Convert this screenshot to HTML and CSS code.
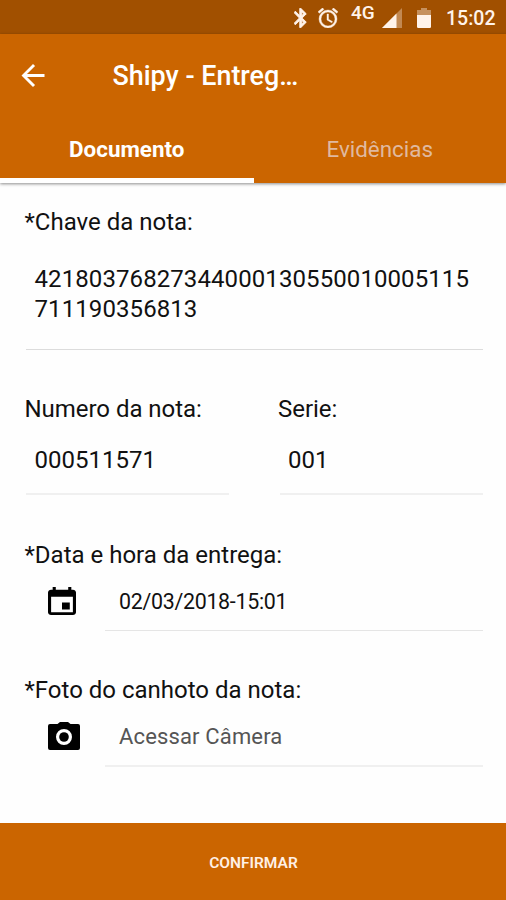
FILE: index.html
```html
<!DOCTYPE html>
<html lang="pt-BR">
<head>
<meta charset="utf-8">
<title>Shipy - Entrega</title>
<link rel="stylesheet" href="styles.css">
</head>
<body>
<div class="screen">
  <div class="status">
    <svg class="bt" viewBox="5 2 14.5 20" width="14" height="20"><path fill="currentColor" stroke="currentColor" stroke-width="1" d="M17.71 7.71 12 2h-1v7.59L6.41 5 5 6.41 10.59 12 5 17.59 6.41 19 11 14.41V22h1l5.71-5.71-4.3-4.29 4.3-4.29zM13 5.83l1.88 1.88L13 9.59V5.83zm1.88 10.46L13 18.17v-3.76l1.88 1.88z"/></svg>
    <svg class="alarm" viewBox="2 2 20 20" width="20" height="20"><path fill="currentColor" stroke="currentColor" stroke-width=".4" d="M22 5.72l-4.6-3.86-1.29 1.53 4.6 3.86L22 5.72zM7.88 3.39 6.6 1.86 2 5.71l1.29 1.53 4.59-3.85zM12.5 8H11v6l4.75 2.85.75-1.23-4-2.37V8zM12 4a9 9 0 1 0 0 18 9 9 0 0 0 0-18zm0 16a7 7 0 1 1 0-14 7 7 0 0 1 0 14z"/></svg>
    <span class="net">4G</span>
    <svg class="signal" viewBox="0 0 20 20" width="20" height="20"><path fill="currentColor" opacity=".35" d="M0 20 20 0v20z"/><path fill="currentColor" d="M0 20 14.5 5.5V20z"/></svg>
    <svg class="battery" viewBox="0 0 14 20" width="14" height="20"><path fill="currentColor" opacity=".4" d="M0 7V2h4V0h6v2h4v5z"/><path fill="currentColor" d="M0 7h14v11.8q0 1.2-1.2 1.2H1.2Q0 20 0 18.800z"/></svg>
    <span class="clock">15:02</span>
  </div>
  <header class="top">
    <div class="bar">
      <svg class="back" viewBox="4 4 16 16" width="23" height="23"><path fill="currentColor" d="M20 11H7.830l5.590-5.590L12 4l-8 8 8 8 1.410-1.410L7.830 13H20v-2z"/></svg>
      <h1>Shipy - Entreg…</h1>
    </div>
    <nav class="tabs">
      <span class="tab active">Documento</span>
      <span class="tab">Evidências</span>
    </nav>
  </header>
  <main class="form">
    <section class="field key">
      <label>*Chave da nota:</label>
      <div class="value">42180376827344000130550010005115<br>711190356813</div>
    </section>
    <div class="pair">
      <section class="field">
        <label>Numero da nota:</label>
        <div class="value">000511571</div>
      </section>
      <section class="field">
        <label>Serie:</label>
        <div class="value">001</div>
      </section>
    </div>
    <section class="field date">
      <label>*Data e hora da entrega:</label>
      <div class="row">
        <svg class="calendar" viewBox="3 1 18 20" width="28" height="28" preserveAspectRatio="none"><path d="M19 3h-1V1h-2v2H8V1H6v2H5c-1.110 0-1.990.9-1.990 2L3 19c0 1.100.89 2 2 2h14c1.100 0 2-.9 2-2V5c0-1.100-.9-2-2-2zm0 16H5V8h14v11zM17 12h-5v5h5v-5z"/></svg>
        <div class="value small">02/03/2018-15:01</div>
      </div>
    </section>
    <section class="field photo">
      <label>*Foto do canhoto da nota:</label>
      <div class="row">
        <svg class="camera" viewBox="0 0 32 28" width="32" height="28"><path fill-rule="evenodd" d="M2 2H9.500L12 0h8l2.500 2H30q2 0 2 2v22q0 2-2 2H2q-2 0-2-2V4q0-2 2-2zM16 7a8 8 0 1 0 0 16 8 8 0 0 0 0-16z"/><circle cx="16" cy="15" r="4.800"/></svg>
        <div class="value small hint">Acessar Câmera</div>
      </div>
    </section>
  </main>
  <button class="confirm">CONFIRMAR</button>
</div>
</body>
</html>
```
FILE: styles.css
```css
* { box-sizing: border-box; }
body { margin: 0; font-family: Roboto, "Liberation Sans", sans-serif; color: #111; background: #fefefe; }
.screen { width: 506px; height: 900px; display: flex; flex-direction: column; }
svg { flex: none; display: block; }

.status { height: 34px; background: #a15000; color: #fff3ea; display: flex; align-items: center; padding: 2px 0 0 294px; }
.alarm { margin-left: 10px; }
.net { margin: -10px 0 0 13px; width: 25px; font-size: 19px; font-weight: 500; line-height: 20px; }
.signal { margin-left: 6px; }
.battery { margin-left: 15px; }
.clock { margin: 2px 0 0 15px; font-size: 19.5px; font-weight: 500; line-height: 24px; white-space: nowrap; }

.top { height: 149px; background: #cb6500; color: #fff; box-shadow: 0 1px 3px rgba(0,0,0,.45); position: relative; }
.bar { height: 84px; display: flex; align-items: center; padding: 0 0 1px 21px; }
.back { width: 24px; }
h1 { margin: 0 0 0 67.500px; font-size: 26.900px; font-weight: 500; line-height: 32px; }
.tabs { display: grid; grid-template-columns: 253.500px 252.500px; height: 65px; }
.tab { text-align: center; font-size: 22.400px; line-height: 58px; padding-top: 2px; color: #e0b99f; border-bottom: 5px solid transparent; }
.tab.active { color: #fff; font-weight: 700; border-bottom-color: #fff; }

.form { flex: 1; padding: 24px 23px 0 24.500px; }
label { display: block; font-size: 24px; line-height: 30px; }
.value { font-size: 24px; line-height: 30px; padding-left: 8.500px; border-bottom: 2px solid #f0f0f0; white-space: nowrap; }
.key .value { margin: 27px 0 0 1.500px; height: 86px; border-bottom: 1px solid #dcdcdc; letter-spacing: .09px; }
.pair { display: grid; grid-template-columns: 204.500px 205px; column-gap: 49px; margin-top: 44px; }
.pair label { letter-spacing: -.04px; }
.pair .value { margin: 21px 0 0 1.500px; height: 50px; }
.date { margin-top: 45px; }
.row { display: flex; align-items: flex-start; }
.row .value { flex: 1; height: 45px; padding-left: 14px; }
.small { font-size: 22px; }
.date .small { font-size: 21.400px; letter-spacing: -.3px; padding-top: 1px; border-bottom: 1px solid #e5e5e5; }
.row .hint { height: 46px; padding-top: 1px; color: #555; letter-spacing: .15px; }
.calendar { margin: 1px 29px 0 23.500px; }
.date .row { margin-top: 16px; }
.camera { margin: 1px 25px 0 23.500px; }
.photo { margin-top: 44px; }
.photo .row { margin-top: 16px; }

.confirm { height: 77px; border: 0; padding: 3px 0 0 1px; background: #cb6500; color: #fff0e5; font: 600 15.500px Roboto, "Liberation Sans", sans-serif; }
```
